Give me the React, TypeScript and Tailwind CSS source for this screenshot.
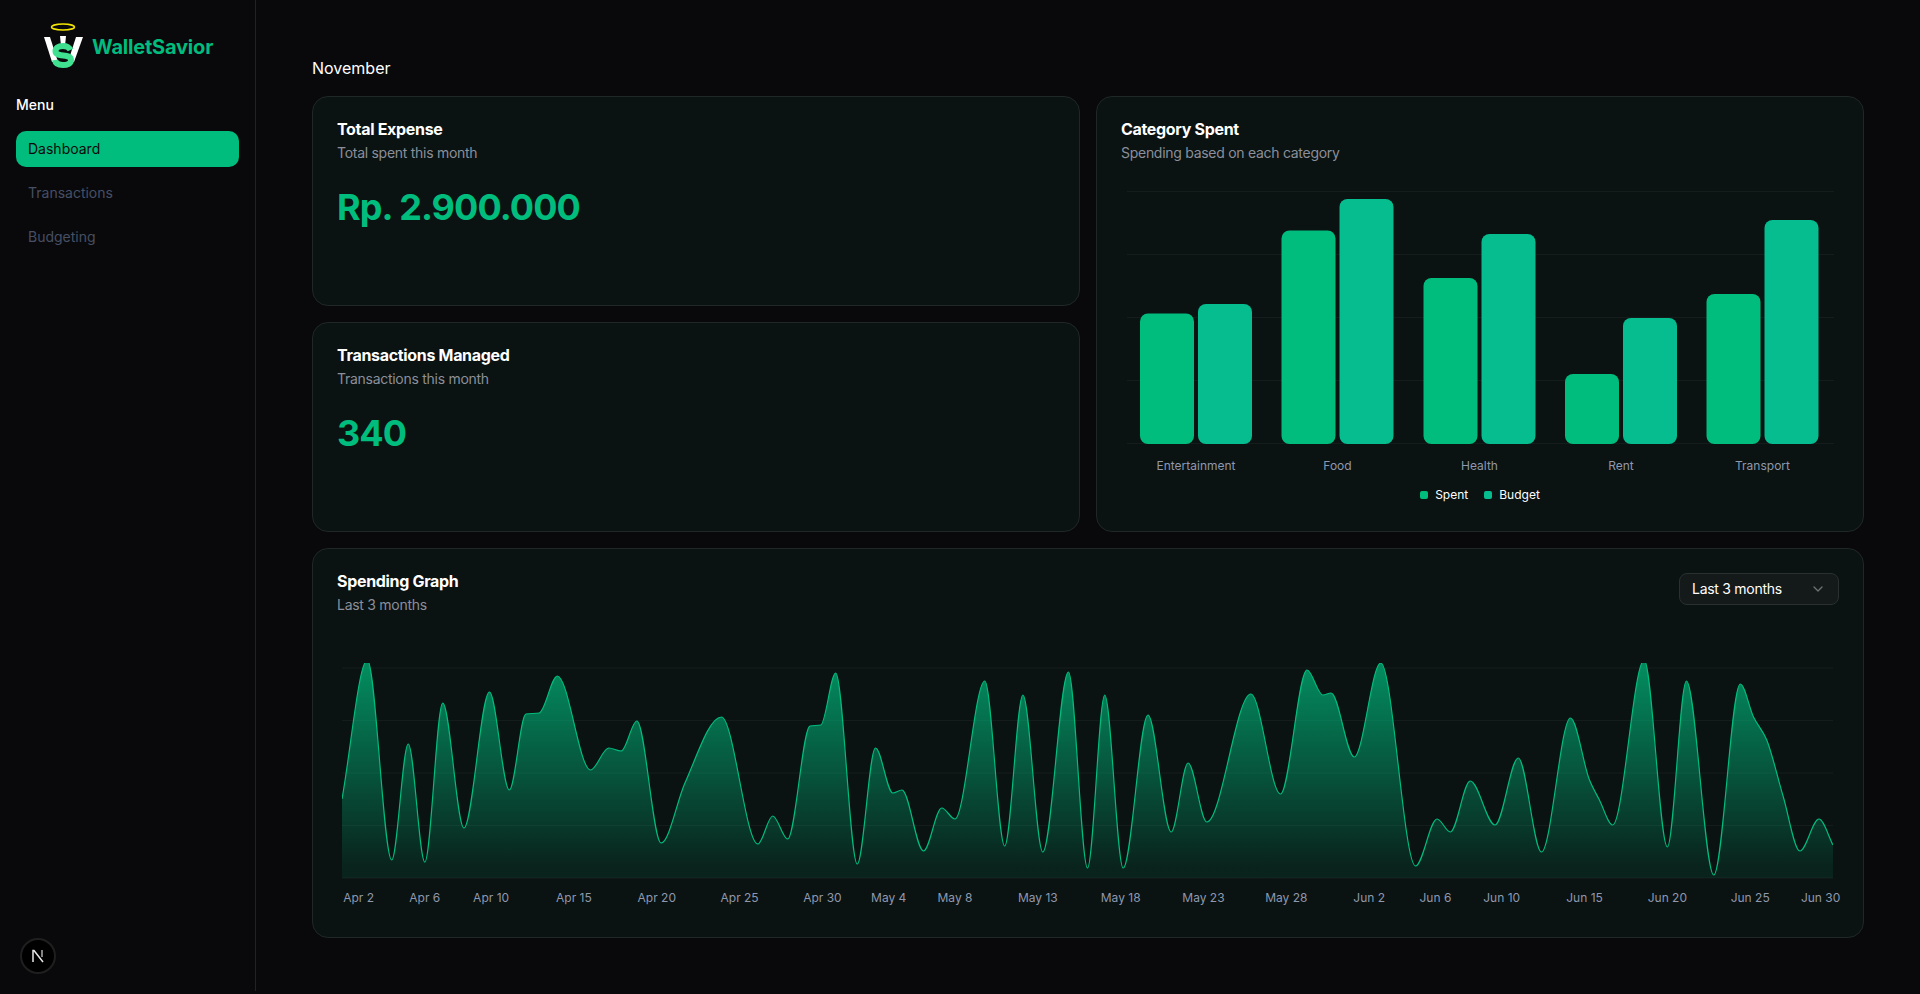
import React from "react";

const font = { fontFamily: "Inter, 'Liberation Sans', sans-serif" };

// [day index, y read off the chart]
const spending: [number, number][] = [
  [0, 799], [1.53, 660], [3, 860], [4, 744], [5, 862], [6.08, 703], [7.36, 828], [8.9, 692],
  [10.1, 790], [11.1, 714], [11.9, 713], [13, 676], [15, 770], [16.1, 748], [16.85, 751],
  [17.8, 721], [19.26, 843], [20.7, 783], [22.9, 717], [25.1, 844], [26, 816], [26.9, 839],
  [28.25, 726], [28.9, 725], [29.8, 673], [31.1, 864], [32.2, 748], [33.25, 793], [33.8, 790],
  [35.1, 851], [36.2, 808], [37, 819], [38.8, 681], [40, 846], [41.1, 695], [42.3, 852],
  [43.85, 672], [45, 868], [46.04, 695], [47.15, 868], [48.65, 715], [50.05, 832], [51.07, 763],
  [52.2, 822], [54.86, 694], [56.65, 794], [58.25, 670], [59.2, 695], [59.7, 693], [61.1, 757],
  [62.7, 663], [64.8, 866], [66.1, 819], [66.9, 832], [68.1, 781], [69.6, 825], [71, 758],
  [72.4, 852], [74.15, 718], [75.3, 780], [75.9, 800], [76.7, 825], [78.6, 660], [80, 847],
  [81.15, 681], [82.8, 875], [84.4, 684], [85.2, 717], [86, 740], [87, 797], [88, 851],
  [89.15, 819], [90, 845],
];

const dayX = (d: number) => 342 + d * 16.567;

// monotone cubic through the points, same idea as d3 curveMonotoneX
const linePath = (pts: [number, number][]) => {
  const n = pts.length;
  const slopes: number[] = [];
  for (let i = 0; i < n; i++) {
    if (i === 0 || i === n - 1) {
      const a = pts[i === 0 ? 0 : n - 2];
      const b = pts[i === 0 ? 1 : n - 1];
      slopes.push((b[1] - a[1]) / (b[0] - a[0]));
      continue;
    }
    const h0 = pts[i][0] - pts[i - 1][0];
    const h1 = pts[i + 1][0] - pts[i][0];
    const s0 = (pts[i][1] - pts[i - 1][1]) / h0;
    const s1 = (pts[i + 1][1] - pts[i][1]) / h1;
    const p = (s0 * h1 + s1 * h0) / (h0 + h1);
    slopes.push((Math.sign(s0) + Math.sign(s1)) * Math.min(Math.abs(s0), Math.abs(s1), 0.5 * Math.abs(p)));
  }
  let d = `M${pts[0][0]},${pts[0][1]}`;
  for (let i = 1; i < n; i++) {
    const dx = (pts[i][0] - pts[i - 1][0]) / 3;
    d += `C${pts[i - 1][0] + dx},${pts[i - 1][1] + dx * slopes[i - 1]},${pts[i][0] - dx},${pts[i][1] - dx * slopes[i]},${pts[i][0]},${pts[i][1]}`;
  }
  return d;
};

const line = linePath(spending.map(([d, y]) => [dayX(d), y]));
const area = `${line}L${dayX(90)},878L${dayX(0)},878Z`;

const ticks: [string, number][] = [
  ["Apr 2", 1], ["Apr 6", 5], ["Apr 10", 9], ["Apr 15", 14], ["Apr 20", 19], ["Apr 25", 24],
  ["Apr 30", 29], ["May 4", 33], ["May 8", 37], ["May 13", 42], ["May 18", 47], ["May 23", 52],
  ["May 28", 57], ["Jun 2", 62], ["Jun 6", 66], ["Jun 10", 70], ["Jun 15", 75], ["Jun 20", 80],
  ["Jun 25", 85], ["Jun 30", 89.25],
];

const categories = [
  { name: "Entertainment", x: 1140, spent: 313.5, budget: 304 },
  { name: "Food", x: 1281.5, spent: 230.5, budget: 199 },
  { name: "Health", x: 1423.5, spent: 278, budget: 234 },
  { name: "Rent", x: 1565, spent: 374, budget: 318 },
  { name: "Transport", x: 1706.5, spent: 294, budget: 220 },
];

const Logo = () => (
  <svg width="50" height="54" viewBox="38 20 50 54" fill="none" className="shrink-0">
    <ellipse cx="63" cy="27" rx="11.5" ry="3" stroke="#f5e600" strokeWidth="1.6" />
    <path d="M44 37H50L58 62H52Z" fill="#fff" />
    <path d="M60 36H66L65 46H61Z" fill="#fff" />
    <path d="M76 37H83L74 62H68Z" fill="#fff" />
    <path
      d="M70.5 50C69 47 66 46 63 46C58 46 55.5 48 55.5 51C55.5 58 71 53 71 60C71 63.5 67.5 65 63 65C58.5 65 55.5 63.5 55 60"
      stroke="#3fe08f"
      strokeWidth="6"
    />
  </svg>
);

const NextBadge = () => (
  <div className="ml-1 flex h-9 w-9 items-center justify-center rounded-full border-2 border-[#1f1f1f] bg-black">
    <svg width="14" height="14" viewBox="0 0 14 14" fill="none">
      <path d="M2 13V1.5h1L12 13" stroke="#e8e8e8" strokeWidth="1.5" />
      <path d="M11 1v7" stroke="#bbb" strokeWidth="1.4" />
    </svg>
  </div>
);

const CardHead = ({ title, sub }: { title: string; sub: string }) => (
  <div className="flex flex-col gap-1.5">
    <h3 className="text-base leading-none font-bold tracking-[-0.02em] text-white">{title}</h3>
    <p className="text-sm tracking-[-0.02em] text-[#8b8f99]">{sub}</p>
  </div>
);

const StatCard = ({ title, sub, value }: { title: string; sub: string; value: string }) => (
  <div className="h-[210px] rounded-2xl border border-[#1f2827] bg-[#0a1212] px-6 py-6">
    <CardHead title={title} sub={sub} />
    <p className="mt-6 text-4xl font-bold tracking-[-0.025em] text-[#00bc7d]">{value}</p>
  </div>
);

const CategoryChart = () => (
  <svg width="718" height="293" viewBox="1121 187 718 293" className="mt-6 block">
    {[191.5, 254.5, 317.5, 380.5, 443.5].map((y) => (
      <line key={y} x1="1127" x2="1834" y1={y} y2={y} stroke="#141d1c" />
    ))}
    {categories.map((c) => (
      <g key={c.name}>
        <rect x={c.x} y={c.spent} width="54" height={444 - c.spent} rx="8" fill="#00bc7d" />
        <rect x={c.x + 58} y={c.budget} width="54" height={444 - c.budget} rx="8" fill="#05bd8f" />
        <text x={c.x + 56} y="469.5" textAnchor="middle" fontSize="12" fill="#8f98ad">
          {c.name}
        </text>
      </g>
    ))}
  </svg>
);

const SpendingChart = () => (
  <svg width="1502" height="274" viewBox="337 639 1502 274" className="mt-6 block overflow-visible">
    <defs>
      <linearGradient id="fillSpent" x1="0" y1="0" x2="0" y2="1">
        <stop offset="5%" stopColor="#00bc7d" stopOpacity="0.7" />
        <stop offset="95%" stopColor="#00bc7d" stopOpacity="0.1" />
      </linearGradient>
      <clipPath id="plot">
        <rect x="342" y="663" width="1491" height="216" />
      </clipPath>
    </defs>
    {[668, 720.5, 773, 825.5, 878].map((y) => (
      <line key={y} x1="342" x2="1833" y1={y} y2={y} stroke="#141d1c" />
    ))}
    <g clipPath="url(#plot)">
      <path d={area} fill="url(#fillSpent)" />
      <path d={line} fill="none" stroke="#00bc7d" strokeWidth="1.2" />
    </g>
    {ticks.map(([label, d]) => (
      <text key={label} x={dayX(d)} y="901.5" textAnchor="middle" fontSize="12" fill="#8f98ad">
        {label}
      </text>
    ))}
  </svg>
);

export default function App() {
  return (
    <div style={font} className="flex min-h-screen items-start bg-[#09090c] text-white">
      <aside className="flex h-[991px] w-[256px] shrink-0 flex-col border-r border-[#222226] px-4 pt-5 pb-[17px]">
        <div className="flex items-center gap-1 pl-[22px]">
          <Logo />
          <span className="text-xl font-bold tracking-[-0.01em] whitespace-nowrap text-[#00bc7d]">WalletSavior</span>
        </div>
        <p className="mt-[21px] text-sm font-medium">Menu</p>
        <nav className="mt-4 flex flex-col gap-2">
          <div className="flex h-9 items-center rounded-[10px] bg-[#00bc7d] px-3 text-sm text-[#0a0a0a]">Dashboard</div>
          <div className="flex h-9 items-center px-3 text-sm text-[#474f63]">Transactions</div>
          <div className="flex h-9 items-center px-3 text-sm text-[#474f63]">Budgeting</div>
        </nav>
        <div className="mt-auto">
          <NextBadge />
        </div>
      </aside>
      <main className="flex-1 px-14 pt-14">
        <p className="mb-4 text-base">November</p>
        <div className="grid grid-cols-2 gap-4">
          <div className="flex flex-col gap-4">
            <StatCard title="Total Expense" sub="Total spent this month" value="Rp. 2.900.000" />
            <StatCard title="Transactions Managed" sub="Transactions this month" value="340" />
          </div>
          <div className="h-[436px] rounded-2xl border border-[#1f2827] bg-[#0a1212] px-6 py-6">
            <CardHead title="Category Spent" sub="Spending based on each category" />
            <CategoryChart />
            <div className="mt-[7px] flex items-center justify-center gap-4 text-xs">
              <span className="flex items-center gap-[7px]">
                <span className="h-2 w-2 rounded-[2px] bg-[#00bc7d]" />
                Spent
              </span>
              <span className="flex items-center gap-[7px]">
                <span className="h-2 w-2 rounded-[2px] bg-[#05bd8f]" />
                Budget
              </span>
            </div>
          </div>
          <div className="col-span-2 h-[390px] rounded-2xl border border-[#1f2827] bg-[#0a1212] px-6 py-6">
            <div className="flex items-start justify-between">
              <CardHead title="Spending Graph" sub="Last 3 months" />
              <div className="flex h-8 w-40 items-center justify-between rounded-lg border border-[#2a302f] bg-[#141a1a] px-3 text-sm tracking-[-0.02em]">
                Last 3 months
                <svg width="16" height="16" viewBox="0 0 24 24" fill="none" stroke="#6b7070" strokeWidth="2" strokeLinecap="round" strokeLinejoin="round">
                  <path d="m6 9 6 6 6-6" />
                </svg>
              </div>
            </div>
            <SpendingChart />
          </div>
        </div>
      </main>
    </div>
  );
}
